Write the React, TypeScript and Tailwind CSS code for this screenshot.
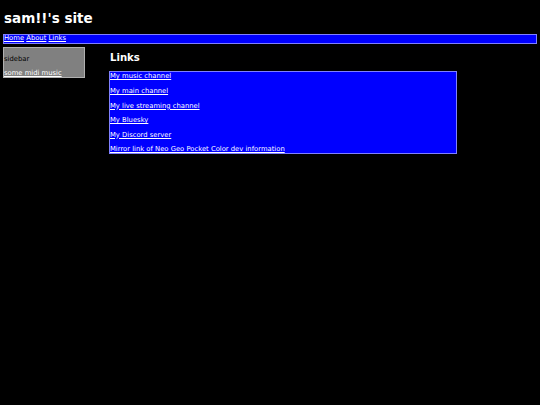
import React from "react";

const links = [
  "My music channel",
  "My main channel",
  "My live streaming channel",
  "My Bluesky",
  "My Discord server",
  "Mirror link of Neo Geo Pocket Color dev information",
];

export default function App() {
  return (
    <div className="min-h-[405px] w-[540px] bg-black px-[3px] text-white font-['DejaVu_Sans',sans-serif]">
      <h1 className="pt-[11px] pb-[7px] pl-[1px] text-[13.5px] leading-[15.7px] font-bold">sam!!'s site</h1>
      <nav className="border border-[#8080ff] bg-[#0000ff] text-[6.8px] leading-[7.86px]">
        <a href="#" className="underline">Home</a> <a href="#" className="underline">About</a>{" "}
        <a href="#" className="underline">Links</a>
      </nav>
      <div className="flex items-start">
        <aside className="mt-[3.4px] w-[82px] border border-[#b0b0b0] bg-[#808080] text-[6.8px] leading-[8px]">
          <p className="mt-[7px] mb-[6px] text-black">sidebar</p>
          <a href="#" className="block underline text-white">some midi music</a>
        </aside>
        <main className="ml-[24px]">
          <h2 className="mt-[8.4px] mb-[7.6px] pl-[1px] text-[10.125px] leading-[11.8px] font-bold">Links</h2>
          <div className="flex w-[348px] flex-col gap-[6.6px] border border-[#8080ff] bg-[#0000ff] text-[6.8px] leading-[8px]">
            {links.map((l) => (
              <a key={l} href="#" className="underline text-white">
                {l}
              </a>
            ))}
          </div>
        </main>
      </div>
    </div>
  );
}
